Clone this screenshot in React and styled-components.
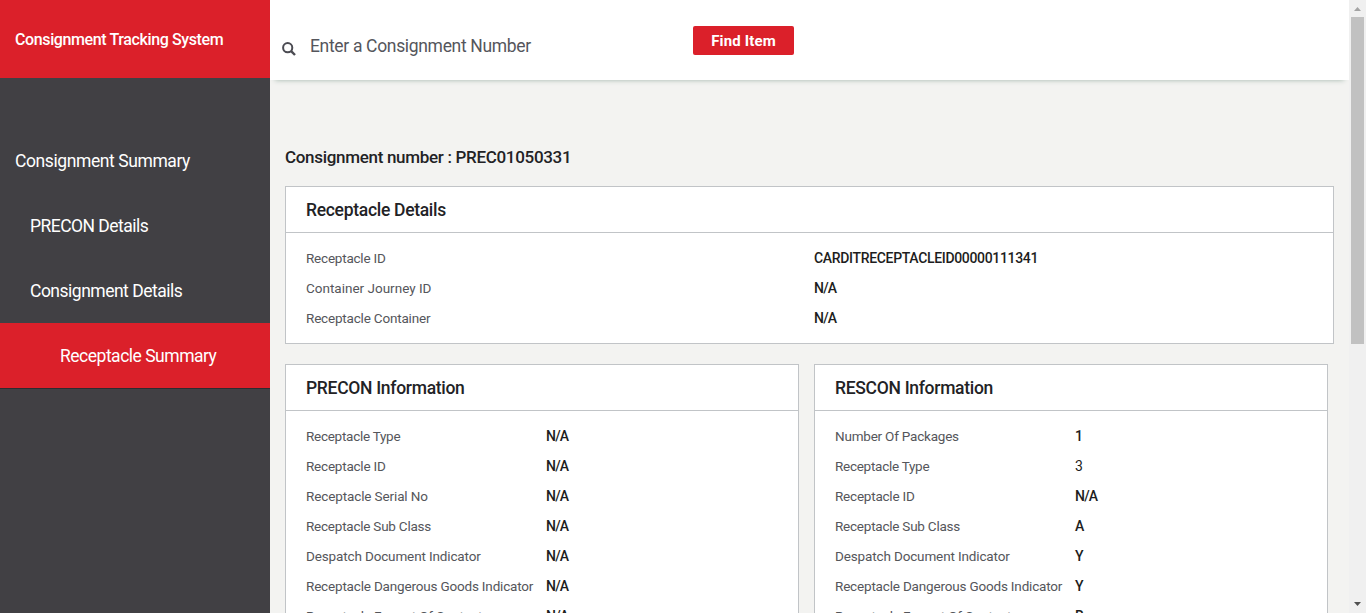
import React from "react";
import styled, { createGlobalStyle } from "styled-components";

const Global = createGlobalStyle`
  *, *::before, *::after { box-sizing: border-box; }
  html, body, #root { height: 100%; }
  body { margin: 0; overflow: hidden; font-family: Roboto, "Liberation Sans", sans-serif; color: #222225; background: #f3f3f1; }
`;

const Page = styled.div`display: flex; height: 613px; overflow: hidden;`;
const Text = styled.span`
  white-space: nowrap;
  letter-spacing: ${(p) => p.$track || 0}px;
`;

const Sidebar = styled.aside`flex: 0 0 270px; background: #414044; color: #fff;`;
const Brand = styled.div`
  height: 78px; margin-bottom: 50px; padding: 2px 15px 0; display: flex; align-items: center;
  background: #db202a; font-size: 16px; font-weight: 500; line-height: 20px;
`;
const NavItem = styled.a`
  display: flex; align-items: center; height: 65px; padding-left: ${(p) => p.$indent}px;
  font-size: 17.5px; line-height: 24px;
  background: ${(p) => (p.$active ? "#db202a" : "transparent")};
  box-shadow: ${(p) => (p.$active ? "0 1px 0 #2d2c30" : "none")};
`;

const Main = styled.main`flex: 1; min-width: 0; display: flex; flex-direction: column; overflow: hidden;`;
const TopBar = styled.header`
  flex: 0 0 80px; display: flex; align-items: flex-start; background: #fff;
  box-shadow: 0 5px 5px -5px #9fb3a8;
`;
const SearchIcon = styled.svg`width: 14px; height: 14px; margin: 42px 14px 0 12px; flex: none;`;
const Field = styled.div`width: 383px; padding-top: 34px; font-size: 17.5px; line-height: 24px; color: #55565c;`;
const FindButton = styled.button`
  width: 101px; height: 29px; margin-top: 26px; padding: 1px 0 0; border: 0; border-radius: 2px;
  background: #db202a; color: #fff; font: 700 15px/28px Roboto, sans-serif;
`;

const Content = styled.div`flex: 1; min-height: 0; padding: 65px 15px 0;`;
const Heading = styled.h1`margin: 0 0 17px; font-size: 17px; font-weight: 500; line-height: 24px;`;
const Card = styled.section`width: ${(p) => p.$width}px; background: #fff; border: 1px solid #c1c4c7;`;
const CardTitle = styled.h2`
  margin: 0; height: 46px; padding-left: 20px; border-bottom: 1px solid #c1c4c7;
  font-size: 17.5px; font-weight: 500; line-height: 46px;
`;
const Rows = styled.dl`margin: 0; padding: 10px 20px;`;
const Row = styled.div`
  display: grid; grid-template-columns: ${(p) => p.$label}px 1fr; height: 30px; line-height: 30px;
`;
const Label = styled.dt`color: #55565b; font-size: 13.5px;`;
const Value = styled.dd`
  margin: 0; color: #1d1d20; font-size: 14px;
  font-weight: ${(p) => (p.$light ? 400 : 500)};
`;
const Columns = styled.div`display: flex; gap: 15px; margin-top: 20px;`;

const Scrollbar = styled.div`
  flex: 0 0 17px; display: flex; flex-direction: column; align-items: center; background: #f0f0f0;
`;
const Arrow = styled.svg`width: 17px; height: 17px; flex: none;`;
const Thumb = styled.div`width: 13px; height: 327px; margin-bottom: auto; background: #c1c1c1;`;

const nav = [
  { text: "Consignment Summary", indent: 15, track: -0.41 },
  { text: "PRECON Details", indent: 30, track: -0.53 },
  { text: "Consignment Details", indent: 30, track: -0.5 },
  { text: "Receptacle Summary", indent: 60, track: -0.49, active: true },
];

const receptacle = [
  ["Receptacle ID", "CARDITRECEPTACLEID00000111341", -0.22, -0.33],
  ["Container Journey ID", "N/A", 0, -0.8],
  ["Receptacle Container", "N/A", -0.19, -0.8],
];
const precon = [
  ["Receptacle Type", "N/A", -0.27, -0.8],
  ["Receptacle ID", "N/A", -0.22, -0.8],
  ["Receptacle Serial No", "N/A", -0.12, -0.8],
  ["Receptacle Sub Class", "N/A", -0.23, -0.8],
  ["Despatch Document Indicator", "N/A", -0.14, -0.8],
  ["Receptacle Dangerous Goods Indicator", "N/A", -0.18, -0.8],
  ["Receptacle Format Of Contents", "N/A", -0.18, -0.8],
];
const rescon = [
  ["Number Of Packages", "1", -0.21, 0],
  ["Receptacle Type", "3", -0.27, 0],
  ["Receptacle ID", "N/A", -0.22, -0.8],
  ["Receptacle Sub Class", "A", -0.23, 0],
  ["Despatch Document Indicator", "Y", -0.14, 0],
  ["Receptacle Dangerous Goods Indicator", "Y", -0.18, 0],
  ["Receptacle Format Of Contents", "B", -0.18, 0],
];

function Panel({ title, track, width, label, rows }) {
  return (
    <Card $width={width}>
      <CardTitle><Text $track={track}>{title}</Text></CardTitle>
      <Rows>
        {rows.map(([name, value, nameTrack, valueTrack]) => (
          <Row key={name} $label={label}>
            <Label><Text $track={nameTrack}>{name}</Text></Label>
            <Value $light={value === "3"}><Text $track={valueTrack}>{value}</Text></Value>
          </Row>
        ))}
      </Rows>
    </Card>
  );
}

export default function App() {
  return (
    <>
      <Global />
      <Page>
        <Sidebar>
          <Brand><Text $track={-0.38}>Consignment Tracking System</Text></Brand>
          {nav.map((n) => (
            <NavItem key={n.text} $indent={n.indent} $active={n.active}><Text $track={n.track}>{n.text}</Text></NavItem>
          ))}
        </Sidebar>
        <Main>
          <TopBar>
            <SearchIcon viewBox="0 0 14 14" fill="none" stroke="#4b4b52" strokeWidth="2">
              <circle cx="5.7" cy="5.7" r="4.6" />
              <path d="M8.9 8.9L13 13" strokeWidth="2.4" />
            </SearchIcon>
            <Field><Text $track={-0.33}>Enter a Consignment Number</Text></Field>
            <FindButton><Text $track={0.15}>Find Item</Text></FindButton>
          </TopBar>
          <Content>
            <Heading><Text $track={-0.31}>Consignment number : PREC01050331</Text></Heading>
            <Panel title="Receptacle Details" track={-0.3} width={1049} label={508} rows={receptacle} />
            <Columns>
              <Panel title="PRECON Information" track={-0.3} width={514} label={240} rows={precon} />
              <Panel title="RESCON Information" track={-0.3} width={514} label={240} rows={rescon} />
            </Columns>
          </Content>
        </Main>
        <Scrollbar>
          <Arrow viewBox="0 0 17 17"><path d="M5 11h7L8.5 7z" fill="#a3a3a3" /></Arrow>
          <Thumb />
          <Arrow viewBox="0 0 17 17"><path d="M5 6h7L8.5 10z" fill="#505050" /></Arrow>
        </Scrollbar>
      </Page>
    </>
  );
}
